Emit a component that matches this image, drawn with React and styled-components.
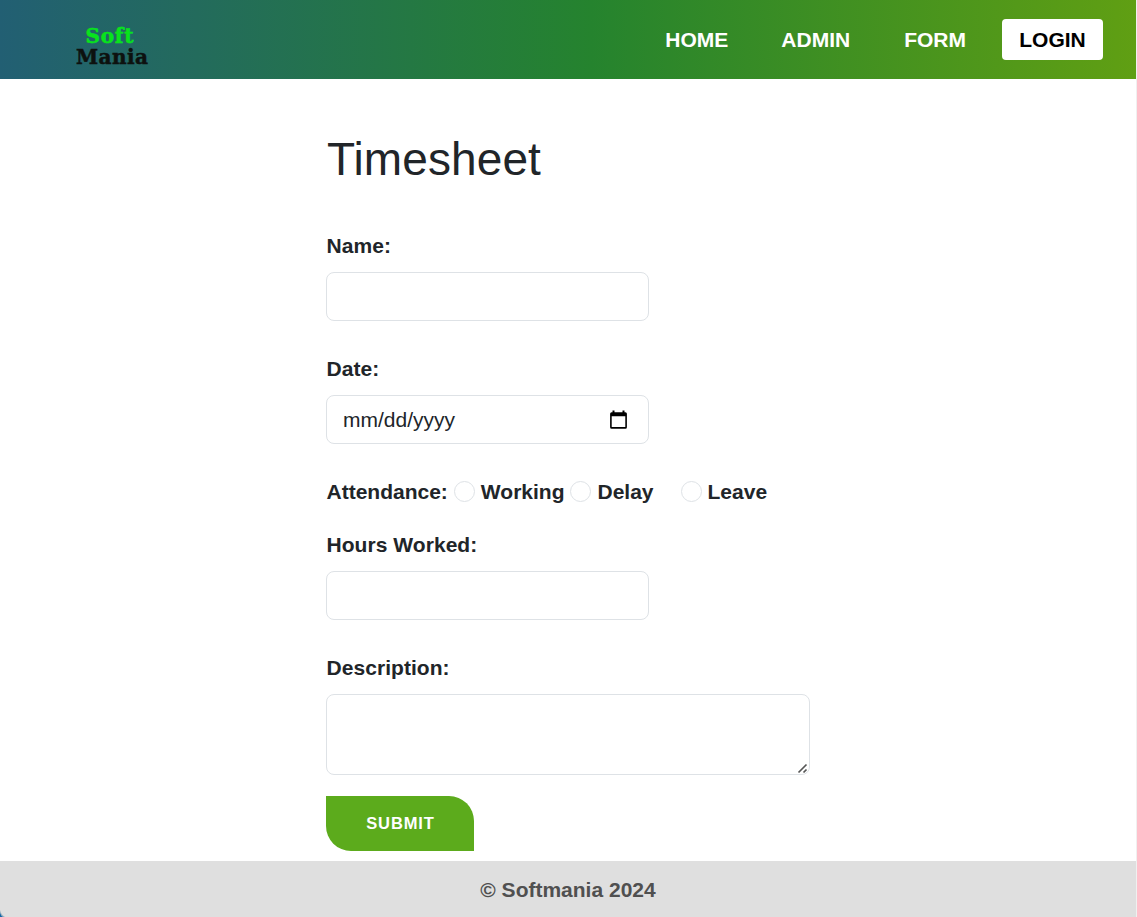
import React from "react";
import styled, { createGlobalStyle } from "styled-components";

const GlobalStyle = createGlobalStyle`
  * { box-sizing: border-box; }
  body {
    margin: 0;
    background: #fff;
    color: #212529;
    font-family: "Liberation Sans", Arial, sans-serif;
    font-size: 21px;
    line-height: 30px;
    overflow: hidden;
  }
`;

const Page = styled.div`
  position: relative;
  display: flex;
  flex-direction: column;
  height: 917px;
  border-right: 1px solid #f0f0f0;
`;

const Header = styled.header`
  display: flex;
  align-items: center;
  justify-content: space-between;
  height: 79px;
  flex: none;
  padding: 0 33px 0 76px;
  background: linear-gradient(to right, #225f73, #25832e 52%, #609f13);
`;

const Logo = styled.svg`
  display: block;
  width: 74px;
  height: 48px;
  margin-top: 16px;
  font-family: "DejaVu Serif", serif;
  font-weight: 700;
  font-size: 20px;
`;

const Word = styled.text`
  fill: ${(p) => p.$color};
  stroke: ${(p) => p.$color};
  stroke-width: 0.5px;
`;

const Nav = styled.nav`
  display: flex;
  align-items: center;
`;

const NavLink = styled.a`
  color: #fff;
  font-weight: 700;
  margin-right: ${(p) => p.$gap}px;
`;

const LoginButton = styled.button`
  width: 101px;
  height: 41px;
  padding: 0;
  border: 0;
  border-radius: 4px;
  background: #fff;
  color: #000;
  font: 700 21px "Liberation Sans", Arial, sans-serif;
`;

const Form = styled.form`
  display: flex;
  flex-direction: column;
  align-items: flex-start;
  flex: 1;
  padding: 53px 0 0 326px;
`;

const Title = styled.h1`
  margin: 0 0 45px;
  padding-left: 1px;
  font-size: 46px;
  font-weight: 400;
  line-height: 54px;
  letter-spacing: 0.1px;
`;

const Label = styled.label`
  height: 30px;
  margin-bottom: 11px;
  padding-left: 0.5px;
  font-weight: 700;
  letter-spacing: 0.05px;
`;

const Input = styled.input`
  width: 323px;
  height: 49px;
  margin-bottom: 33px;
  padding: 0 16px;
  border: 1px solid #dee2e6;
  border-radius: 8px;
  background: #fff;
  font: inherit;
`;

const DateField = styled.div`
  display: flex;
  align-items: center;
  justify-content: space-between;
  width: 323px;
  height: 49px;
  margin-bottom: 33px;
  padding: 0 19px 0 16px;
  border: 1px solid #dee2e6;
  border-radius: 8px;
`;

const RadioRow = styled.div`
  display: flex;
  align-items: center;
  height: 30px;
  margin-bottom: 23px;
  padding-left: 0.5px;
  font-weight: 700;
`;

const RadioOption = styled.label`
  display: flex;
  align-items: center;
  margin-left: ${(p) => p.$gap}px;
`;

const Radio = styled.input`
  appearance: none;
  width: 21px;
  height: 21px;
  margin: 0 6px 2px 0;
  border: 1px solid #dee2e6;
  border-radius: 50%;
`;

const TextAreaWrap = styled.div`
  position: relative;
  margin-bottom: 21px;
`;

const TextArea = styled.textarea`
  display: block;
  width: 484px;
  height: 81px;
  margin: 0;
  padding: 7px 16px;
  border: 1px solid #dee2e6;
  border-radius: 8px;
  font: inherit;
  resize: none;
`;

const Grip = styled.svg`
  position: absolute;
  right: 2px;
  bottom: 1px;
`;

const Submit = styled.button`
  width: 148px;
  height: 55px;
  padding: 0 0 0 1px;
  border: 0;
  border-radius: 0 25px 0 25px;
  background: #5cab1c;
  color: #fff;
  font: 700 16.5px "Liberation Sans", Arial, sans-serif;
  letter-spacing: 0.9px;
`;

const Footer = styled.footer`
  display: flex;
  align-items: center;
  justify-content: center;
  height: 56px;
  flex: none;
  padding-top: 2px;
  background: #dfdfdf;
  color: #505050;
  font-weight: 700;
`;

const Corner = styled.svg`
  position: absolute;
  left: 0;
  bottom: 0;
`;

function CalendarIcon() {
  return (
    <svg width="20" height="20" viewBox="0 0 20 20">
      <path
        fill="#000"
        d="M3.5 0.5h2v1.7h8V0.5h2v1.7h.9a1.5 1.5 0 0 1 1.5 1.5v13.5a1.5 1.5 0 0 1-1.5 1.5H2.6a1.5 1.5 0 0 1-1.5-1.5V3.7A1.5 1.5 0 0 1 2.6 2.2h.9zM2.7 6.2v10.9h13.6V6.2z"
      />
    </svg>
  );
}

export default function App() {
  return (
    <>
      <GlobalStyle />
      <Page>
        <Header>
          <Logo viewBox="0 0 74 48">
            <Word x="9.5" y="19" $color="#08e31c" textLength="48">Soft</Word>
            <Word x="0" y="40" $color="#0d110f" textLength="72">Mania</Word>
          </Logo>
          <Nav>
            <NavLink $gap={53}>HOME</NavLink>
            <NavLink $gap={54}>ADMIN</NavLink>
            <NavLink $gap={36}>FORM</NavLink>
            <LoginButton>LOGIN</LoginButton>
          </Nav>
        </Header>
        <Form>
          <Title>Timesheet</Title>
          <Label htmlFor="name">Name:</Label>
          <Input id="name" />
          <Label>Date:</Label>
          <DateField>
            <span>mm/dd/yyyy</span>
            <CalendarIcon />
          </DateField>
          <RadioRow>
            <span>Attendance:</span>
            <RadioOption $gap={6}>
              <Radio type="radio" name="attendance" />
              Working
            </RadioOption>
            <RadioOption $gap={6}>
              <Radio type="radio" name="attendance" />
              Delay
            </RadioOption>
            <RadioOption $gap={27}>
              <Radio type="radio" name="attendance" />
              Leave
            </RadioOption>
          </RadioRow>
          <Label htmlFor="hours">Hours Worked:</Label>
          <Input id="hours" />
          <Label htmlFor="description">Description:</Label>
          <TextAreaWrap>
            <TextArea id="description" />
            <Grip width="11" height="11" viewBox="0 0 11 11">
              <path d="M1.5 9.5l8-8M6.5 9.5l3-3" stroke="#555" strokeWidth="1.7" fill="none" />
            </Grip>
          </TextAreaWrap>
          <Submit type="button">SUBMIT</Submit>
        </Form>
        <Footer>© Softmania 2024</Footer>
        <Corner width="5" height="7" viewBox="0 0 5 7">
          <path d="M0 0Q1 5 5 7H0z" fill="#9bb0bf" />
          <path d="M0 3Q1 6 3 7H0z" fill="#1266a8" />
        </Corner>
      </Page>
    </>
  );
}
